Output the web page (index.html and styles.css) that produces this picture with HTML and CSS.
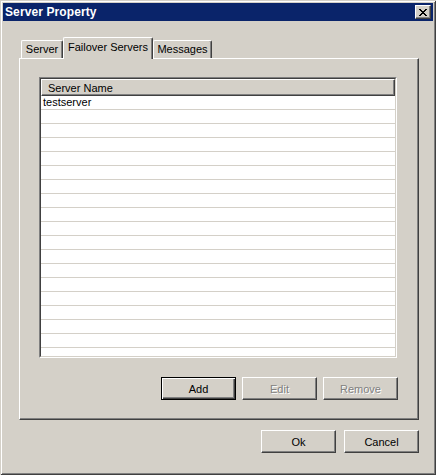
FILE: index.html
```html
<!DOCTYPE html>
<html>
<head>
<meta charset="utf-8">
<link rel="stylesheet" href="styles.css">
</head>
<body>
<div class="window">
  <div class="titlebar">
    <span class="title">Server Property</span>
    <div class="close">
      <svg width="8" height="7" viewBox="0 0 8 7"><path d="M0 0h2v1H0z M6 0h2v1H6z M1 1h2v1H1z M5 1h2v1H5z M2 2h4v1H2z M3 3h2v1H3z M2 4h4v1H2z M1 5h2v1H1z M5 5h2v1H5z M0 6h2v1H0z M6 6h2v1H6z" fill="#000"/></svg>
    </div>
  </div>
  <div class="body">
    <div class="tabs">
      <div class="tab tab-server">Server</div>
      <div class="tab tab-failover active">Failover Servers</div>
      <div class="tab tab-messages">Messages</div>
    </div>
    <div class="panel">
      <div class="list">
        <div class="list-inner">
          <div class="header"><span>Server Name</span></div>
          <div class="rows">
            <div class="row">testserver</div>
            <div class="row"></div><div class="row"></div><div class="row"></div>
            <div class="row"></div><div class="row"></div><div class="row"></div>
            <div class="row"></div><div class="row"></div><div class="row"></div>
            <div class="row"></div><div class="row"></div><div class="row"></div>
            <div class="row"></div><div class="row"></div><div class="row"></div>
            <div class="row"></div><div class="row"></div><div class="row"></div>
          </div>
        </div>
      </div>
      <div class="btnrow">
        <div class="btn default">Add</div>
        <div class="btn disabled">Edit</div>
        <div class="btn disabled">Remove</div>
      </div>
    </div>
    <div class="footer">
      <div class="btn">Ok</div>
      <div class="btn">Cancel</div>
    </div>
  </div>
</div>
</body>
</html>
```
FILE: styles.css
```css
html, body {
  margin: 0;
  padding: 0;
  background: #d4d0c8;
}
body {
  font-family: "Liberation Sans", Arial, sans-serif;
  font-size: 11px;
  color: #000;
}
.window {
  width: 436px;
  height: 475px;
  box-sizing: border-box;
  padding: 3px;
  background: #d4d0c8;
  box-shadow: inset 1px 1px #d4d0c8, inset -1px -1px #404040, inset 2px 2px #fff, inset -2px -2px #808080;
}
.titlebar {
  height: 18px;
  background: #0a246a;
  display: flex;
  align-items: center;
  justify-content: space-between;
  padding: 0 2px 0 2px;
}
.title {
  color: #fff;
  font-weight: bold;
  font-size: 12px;
  letter-spacing: 0.1px;
}
.close {
  width: 16px;
  height: 14px;
  box-sizing: border-box;
  background: #d4d0c8;
  border: 1px solid;
  border-color: #fff #404040 #404040 #fff;
  box-shadow: inset -1px -1px #808080;
  display: flex;
  align-items: center;
  justify-content: center;
  padding-right: 1px;
}
.body {
  padding: 16px 14px 0 16px;
}
.tabs {
  height: 21px;
  display: flex;
  align-items: flex-end;
  padding-left: 2px;
}
.tab {
  height: 18px;
  box-sizing: border-box;
  background: #d4d0c8;
  border-left: 1px solid #fff;
  border-top: 1px solid #fff;
  border-right: 1px solid #404040;
  border-top-left-radius: 2px;
  border-top-right-radius: 2px;
  box-shadow: inset -1px 0 #808080;
  display: flex;
  align-items: center;
  justify-content: center;
  padding-bottom: 1px;
}
.tab-server { width: 42px; }
.tab-failover { width: 90px; }
.tab-messages { width: 59px; }
.tab.active {
  height: 22px;
  margin-bottom: -1px;
  position: relative;
  z-index: 1;
  padding-bottom: 4px;
}
.panel {
  width: 400px;
  height: 362px;
  box-sizing: border-box;
  border: 1px solid;
  border-color: #fff #404040 #404040 #fff;
  box-shadow: inset -1px -1px #808080;
  padding: 18px 20px 0 19px;
}
.list {
  width: 358px;
  height: 281px;
  box-sizing: border-box;
  border: 1px solid;
  border-color: #808080 #fff #fff #808080;
}
.list-inner {
  height: 100%;
  box-sizing: border-box;
  border: 1px solid;
  border-color: #404040 #d4d0c8 #d4d0c8 #404040;
  background: #fff;
  overflow: hidden;
}
.header {
  height: 17px;
  box-sizing: border-box;
  background: #d4d0c8;
  border: 1px solid;
  border-color: #fff #404040 #404040 #fff;
  box-shadow: inset -1px -1px #808080;
  display: flex;
  align-items: center;
  padding-left: 6px;
}
.row {
  height: 14px;
  box-sizing: border-box;
  border-bottom: 1px solid #d4d0c8;
  padding-left: 2px;
  line-height: 13px;
}
.btnrow {
  margin-top: 19px;
  display: flex;
  justify-content: flex-end;
  gap: 6px;
}
.btn {
  width: 75px;
  height: 23px;
  box-sizing: border-box;
  border: 1px solid;
  border-color: #fff #404040 #404040 #fff;
  box-shadow: inset -1px -1px #808080;
  display: flex;
  align-items: center;
  justify-content: center;
  background: #d4d0c8;
}
.btn.default {
  border-color: #000;
  box-shadow: inset 1px 1px #fff, inset -1px -1px #404040, inset -2px -2px #808080;
}
.btn.disabled {
  color: #808080;
  text-shadow: 1px 1px #fff;
}
.footer {
  margin-top: 10px;
  width: 400px;
  display: flex;
  justify-content: flex-end;
  gap: 8px;
}
```
